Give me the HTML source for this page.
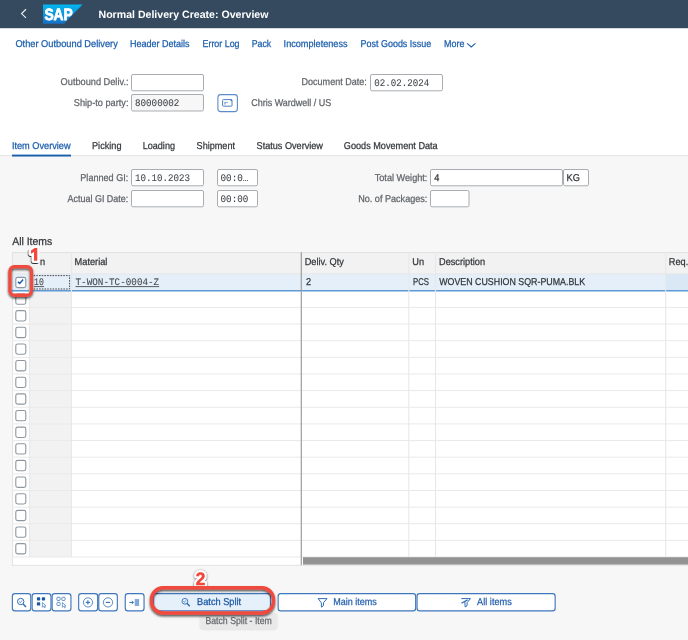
<!DOCTYPE html>
<html><head><meta charset="utf-8"><title>Normal Delivery Create: Overview</title>
<style>html,body{margin:0;padding:0;background:#f7f7f7;}body{width:688px;height:640px;overflow:hidden;}svg{display:block;will-change:transform;text-rendering:geometricPrecision;}</style>
</head><body>
<svg width="688" height="640" viewBox="0 0 688 640">
<rect x="0" y="0" width="688" height="640" fill="#f7f7f7"/>
<rect x="0" y="28" width="688" height="127.2" fill="#fff"/>
<line x1="0" y1="155.7" x2="688" y2="155.7" stroke="#e3e3e3" stroke-width="1"/>
<rect x="0" y="0" width="688" height="28.2" fill="#354a5f"/>
<polyline points="26,9.3 21.6,13.6 26,17.9" fill="none" stroke="#e8ecf0" stroke-width="1.2"/>
<defs><linearGradient id="sapg" x1="0" y1="0" x2="0" y2="1"><stop offset="0" stop-color="#00b9f2"/><stop offset="1" stop-color="#1870c5"/></linearGradient></defs>
<polygon points="43,4.4 82.5,4.4 64,23.8 43,23.8" fill="url(#sapg)"/>
<text x="44.4" y="20.0" font-family="Liberation Sans" font-size="16.4" fill="#fff" font-weight="bold" textLength="28.4" lengthAdjust="spacingAndGlyphs" stroke="#fff" stroke-width="0.8" stroke-linejoin="round">SAP</text>
<text x="98.5" y="17.6" font-family="Liberation Sans" font-size="10.6" fill="#fff" font-weight="bold" textLength="170" lengthAdjust="spacingAndGlyphs">Normal Delivery Create: Overview</text>
<text x="15.4" y="47.3" font-family="Liberation Sans" font-size="9.94" fill="#1a5dab" textLength="102.4" lengthAdjust="spacingAndGlyphs" stroke="#1a5dab" stroke-width="0.25">Other Outbound Delivery</text>
<text x="130" y="47.3" font-family="Liberation Sans" font-size="9.94" fill="#1a5dab" textLength="59.5" lengthAdjust="spacingAndGlyphs" stroke="#1a5dab" stroke-width="0.25">Header Details</text>
<text x="202.5" y="47.3" font-family="Liberation Sans" font-size="9.94" fill="#1a5dab" textLength="37" lengthAdjust="spacingAndGlyphs" stroke="#1a5dab" stroke-width="0.25">Error Log</text>
<text x="251.75" y="47.3" font-family="Liberation Sans" font-size="9.94" fill="#1a5dab" textLength="19.5" lengthAdjust="spacingAndGlyphs" stroke="#1a5dab" stroke-width="0.25">Pack</text>
<text x="283.6" y="47.3" font-family="Liberation Sans" font-size="9.94" fill="#1a5dab" textLength="64" lengthAdjust="spacingAndGlyphs" stroke="#1a5dab" stroke-width="0.25">Incompleteness</text>
<text x="360.6" y="47.3" font-family="Liberation Sans" font-size="9.94" fill="#1a5dab" textLength="70.6" lengthAdjust="spacingAndGlyphs" stroke="#1a5dab" stroke-width="0.25">Post Goods Issue</text>
<text x="444" y="47.3" font-family="Liberation Sans" font-size="9.94" fill="#1a5dab" textLength="20.4" lengthAdjust="spacingAndGlyphs" stroke="#1a5dab" stroke-width="0.25">More</text>
<polyline points="467.1,43.3 471.3,47 475.4,43.3" fill="none" stroke="#1a5dab" stroke-width="1.05"/>
<text x="60.6" y="84.9" font-family="Liberation Sans" font-size="9.94" fill="#606469" textLength="67.9" lengthAdjust="spacingAndGlyphs" stroke="#606469" stroke-width="0.25">Outbound Deliv.:</text>
<rect x="131.5" y="74.5" width="72" height="16.3" fill="#fff" stroke="#a9adb1" stroke-width="1" rx="1.5"/>
<text x="73.8" y="105.5" font-family="Liberation Sans" font-size="9.94" fill="#606469" textLength="54.7" lengthAdjust="spacingAndGlyphs" stroke="#606469" stroke-width="0.25">Ship-to party:</text>
<rect x="131.5" y="94.5" width="72" height="16.5" fill="#f7f7f7" stroke="#a9adb1" stroke-width="1" rx="1.5"/>
<text x="134.9" y="106.3" font-family="Liberation Mono" font-size="10.04" fill="#43474c" textLength="44.5" lengthAdjust="spacingAndGlyphs" stroke="#43474c" stroke-width="0.08">80000002</text>
<rect x="217.9" y="94.6" width="19.5" height="17" fill="#fff" stroke="#5d8ccc" stroke-width="1.1" rx="2.8"/>
<rect x="222.6" y="99.6" width="9.4" height="6.6" fill="none" stroke="#4a80c4" stroke-width="1" rx="0.8"/>
<line x1="224.2" y1="102.6" x2="227.9" y2="102.6" stroke="#6f9ad0" stroke-width="0.9"/>
<rect x="224.2" y="103.2" width="1.4" height="1.3" fill="#6f9ad0"/>
<circle cx="231.3" cy="100.3" r="0.9" fill="#4a80c4"/>
<text x="251.2" y="106.3" font-family="Liberation Sans" font-size="9.94" fill="#606469" textLength="80" lengthAdjust="spacingAndGlyphs" stroke="#606469" stroke-width="0.25">Chris Wardwell / US</text>
<text x="301.6" y="84.9" font-family="Liberation Sans" font-size="9.94" fill="#606469" textLength="65.1" lengthAdjust="spacingAndGlyphs" stroke="#606469" stroke-width="0.25">Document Date:</text>
<rect x="370.5" y="74.5" width="72" height="16.3" fill="#fff" stroke="#a9adb1" stroke-width="1" rx="1.5"/>
<text x="374.2" y="85.7" font-family="Liberation Mono" font-size="10.04" fill="#43474c" textLength="55" lengthAdjust="spacingAndGlyphs" stroke="#43474c" stroke-width="0.08">02.02.2024</text>
<text x="11.9" y="149.1" font-family="Liberation Sans" font-size="9.94" fill="#1a5dab" textLength="58.7" lengthAdjust="spacingAndGlyphs" stroke="#1a5dab" stroke-width="0.25">Item Overview</text>
<rect x="12" y="154.6" width="59" height="1.9" fill="#1a5dab"/>
<text x="92" y="149.1" font-family="Liberation Sans" font-size="9.94" fill="#32363a" textLength="29.5" lengthAdjust="spacingAndGlyphs" stroke="#32363a" stroke-width="0.25">Picking</text>
<text x="142.7" y="149.1" font-family="Liberation Sans" font-size="9.94" fill="#32363a" textLength="32.3" lengthAdjust="spacingAndGlyphs" stroke="#32363a" stroke-width="0.25">Loading</text>
<text x="196.6" y="149.1" font-family="Liberation Sans" font-size="9.94" fill="#32363a" textLength="38.4" lengthAdjust="spacingAndGlyphs" stroke="#32363a" stroke-width="0.25">Shipment</text>
<text x="256.6" y="149.1" font-family="Liberation Sans" font-size="9.94" fill="#32363a" textLength="66.3" lengthAdjust="spacingAndGlyphs" stroke="#32363a" stroke-width="0.25">Status Overview</text>
<text x="343.8" y="149.1" font-family="Liberation Sans" font-size="9.94" fill="#32363a" textLength="93.9" lengthAdjust="spacingAndGlyphs" stroke="#32363a" stroke-width="0.25">Goods Movement Data</text>
<text x="80.3" y="180.5" font-family="Liberation Sans" font-size="9.94" fill="#606469" textLength="48" lengthAdjust="spacingAndGlyphs" stroke="#606469" stroke-width="0.25">Planned GI:</text>
<rect x="131.5" y="169.5" width="72" height="16.3" fill="#fff" stroke="#a9adb1" stroke-width="1" rx="1.5"/>
<text x="134.9" y="181.3" font-family="Liberation Mono" font-size="10.04" fill="#43474c" textLength="55" lengthAdjust="spacingAndGlyphs" stroke="#43474c" stroke-width="0.08">10.10.2023</text>
<rect x="217.5" y="169.5" width="40" height="16.3" fill="#fff" stroke="#a9adb1" stroke-width="1" rx="1.5"/>
<text x="220.5" y="181.3" font-family="Liberation Mono" font-size="10.04" fill="#43474c" textLength="27.9" lengthAdjust="spacingAndGlyphs" stroke="#43474c" stroke-width="0.08">00:0…</text>
<text x="67.5" y="201.5" font-family="Liberation Sans" font-size="9.94" fill="#606469" textLength="60.8" lengthAdjust="spacingAndGlyphs" stroke="#606469" stroke-width="0.25">Actual GI Date:</text>
<rect x="131.5" y="190.5" width="72" height="16.3" fill="#fff" stroke="#a9adb1" stroke-width="1" rx="1.5"/>
<rect x="217.5" y="190.5" width="40" height="16.3" fill="#fff" stroke="#a9adb1" stroke-width="1" rx="1.5"/>
<text x="220.5" y="202.3" font-family="Liberation Mono" font-size="10.04" fill="#43474c" textLength="27.9" lengthAdjust="spacingAndGlyphs" stroke="#43474c" stroke-width="0.08">00:00</text>
<text x="374.7" y="180.5" font-family="Liberation Sans" font-size="9.94" fill="#606469" textLength="52.7" lengthAdjust="spacingAndGlyphs" stroke="#606469" stroke-width="0.25">Total Weight:</text>
<rect x="430.5" y="169.5" width="132" height="16.3" fill="#fff" stroke="#a9adb1" stroke-width="1" rx="1.5"/>
<text x="434.3" y="181" font-family="Liberation Sans" font-size="9.94" fill="#32363a" textLength="5.12" lengthAdjust="spacingAndGlyphs" stroke="#32363a" stroke-width="0.25">4</text>
<rect x="563.5" y="169.5" width="25" height="16.3" fill="#fff" stroke="#a9adb1" stroke-width="1" rx="1.5"/>
<text x="566.6" y="181" font-family="Liberation Sans" font-size="9.94" fill="#32363a" textLength="13.29" lengthAdjust="spacingAndGlyphs" stroke="#32363a" stroke-width="0.25">KG</text>
<text x="358.2" y="201.5" font-family="Liberation Sans" font-size="9.94" fill="#606469" textLength="69.2" lengthAdjust="spacingAndGlyphs" stroke="#606469" stroke-width="0.25">No. of Packages:</text>
<rect x="430.5" y="190.5" width="38.5" height="16.3" fill="#fff" stroke="#a9adb1" stroke-width="1" rx="1.5"/>
<text x="12.2" y="244.8" font-family="Liberation Sans" font-size="11.02" fill="#32363a" textLength="40" lengthAdjust="spacingAndGlyphs" stroke="#32363a" stroke-width="0.25">All Items</text>
<rect x="12.1" y="252.3" width="676" height="313.2" fill="#fff"/>
<rect x="12.1" y="252.3" width="676" height="21.849999999999966" fill="#f2f2f2"/>
<rect x="29.6" y="274.15" width="41.9" height="282.88" fill="#f2f2f2"/>
<rect x="12.1" y="273.8" width="676" height="16.4" fill="#e5eff9"/>
<rect x="665.7" y="273.8" width="22.3" height="16.4" fill="#dae7f5"/>
<line x1="12" y1="252.60000000000002" x2="688" y2="252.60000000000002" stroke="#dedede" stroke-width="0.9"/>
<line x1="12.6" y1="252.3" x2="12.6" y2="565.5" stroke="#e2e2e2" stroke-width="1"/>
<line x1="12" y1="273.95" x2="688" y2="273.95" stroke="#e6e6e6" stroke-width="1"/>
<line x1="12" y1="307.42999999999995" x2="688" y2="307.42999999999995" stroke="#e9e9e9" stroke-width="1"/>
<line x1="12" y1="324.07" x2="688" y2="324.07" stroke="#e9e9e9" stroke-width="1"/>
<line x1="12" y1="340.71" x2="688" y2="340.71" stroke="#e9e9e9" stroke-width="1"/>
<line x1="12" y1="357.34999999999997" x2="688" y2="357.34999999999997" stroke="#e9e9e9" stroke-width="1"/>
<line x1="12" y1="373.99" x2="688" y2="373.99" stroke="#e9e9e9" stroke-width="1"/>
<line x1="12" y1="390.63" x2="688" y2="390.63" stroke="#e9e9e9" stroke-width="1"/>
<line x1="12" y1="407.27" x2="688" y2="407.27" stroke="#e9e9e9" stroke-width="1"/>
<line x1="12" y1="423.90999999999997" x2="688" y2="423.90999999999997" stroke="#e9e9e9" stroke-width="1"/>
<line x1="12" y1="440.54999999999995" x2="688" y2="440.54999999999995" stroke="#e9e9e9" stroke-width="1"/>
<line x1="12" y1="457.19" x2="688" y2="457.19" stroke="#e9e9e9" stroke-width="1"/>
<line x1="12" y1="473.83" x2="688" y2="473.83" stroke="#e9e9e9" stroke-width="1"/>
<line x1="12" y1="490.46999999999997" x2="688" y2="490.46999999999997" stroke="#e9e9e9" stroke-width="1"/>
<line x1="12" y1="507.11" x2="688" y2="507.11" stroke="#e9e9e9" stroke-width="1"/>
<line x1="12" y1="523.75" x2="688" y2="523.75" stroke="#e9e9e9" stroke-width="1"/>
<line x1="12" y1="540.39" x2="688" y2="540.39" stroke="#e9e9e9" stroke-width="1"/>
<line x1="12" y1="557.03" x2="688" y2="557.03" stroke="#e9e9e9" stroke-width="1"/>
<line x1="12" y1="290.78999999999996" x2="688" y2="290.78999999999996" stroke="#5d9ad6" stroke-width="1.6"/>
<line x1="12" y1="565.3" x2="688" y2="565.3" stroke="#e2e2e2" stroke-width="1"/>
<line x1="29.6" y1="252.3" x2="29.6" y2="557.03" stroke="#e8e8e8" stroke-width="1.1"/>
<line x1="71.5" y1="252.3" x2="71.5" y2="557.03" stroke="#e8e8e8" stroke-width="1.1"/>
<line x1="408.8" y1="252.3" x2="408.8" y2="557.03" stroke="#e8e8e8" stroke-width="1.1"/>
<line x1="435.5" y1="252.3" x2="435.5" y2="557.03" stroke="#e8e8e8" stroke-width="1.1"/>
<line x1="665.7" y1="252.3" x2="665.7" y2="557.03" stroke="#e8e8e8" stroke-width="1.1"/>
<line x1="301.3" y1="252.3" x2="301.3" y2="565" stroke="#9c9c9c" stroke-width="1.2"/>
<rect x="303" y="557.2" width="385" height="7.4" fill="#939393"/>
<text x="74.6" y="265.3" font-family="Liberation Sans" font-size="9.94" fill="#32363a" textLength="32.8" lengthAdjust="spacingAndGlyphs" stroke="#32363a" stroke-width="0.25">Material</text>
<text x="304.7" y="265.3" font-family="Liberation Sans" font-size="9.94" fill="#32363a" textLength="39.19" lengthAdjust="spacingAndGlyphs" stroke="#32363a" stroke-width="0.25">Deliv. Qty</text>
<text x="412.3" y="265.3" font-family="Liberation Sans" font-size="9.94" fill="#32363a" textLength="11.76" lengthAdjust="spacingAndGlyphs" stroke="#32363a" stroke-width="0.25">Un</text>
<text x="439" y="265.3" font-family="Liberation Sans" font-size="9.94" fill="#32363a" textLength="46.02" lengthAdjust="spacingAndGlyphs" stroke="#32363a" stroke-width="0.25">Description</text>
<text x="668.8" y="265.3" font-family="Liberation Sans" font-size="9.94" fill="#32363a" textLength="19.43" lengthAdjust="spacingAndGlyphs" stroke="#32363a" stroke-width="0.25">Req.</text>
<text x="40" y="265.3" font-family="Liberation Sans" font-size="9.94" fill="#32363a" textLength="5.12" lengthAdjust="spacingAndGlyphs" stroke="#32363a" stroke-width="0.25">n</text>
<path d="M33.6,275.6 L69.6,275.6 L69.6,289 L33.6,289" fill="none" stroke="#4a4a4a" stroke-width="1" stroke-dasharray="1.6,1.1"/>
<text x="34" y="284.9" font-family="Liberation Mono" font-size="10.04" fill="#43474c" textLength="9.8" lengthAdjust="spacingAndGlyphs" stroke="#43474c" stroke-width="0.08">10</text>
<line x1="34" y1="286.6" x2="44" y2="286.6" stroke="#32363a" stroke-width="0.8"/>
<text x="75.5" y="284.9" font-family="Liberation Mono" font-size="10.04" fill="#43474c" textLength="83.7" lengthAdjust="spacingAndGlyphs" stroke="#43474c" stroke-width="0.08">T-WON-TC-0004-Z</text>
<line x1="75.5" y1="286.6" x2="159.2" y2="286.6" stroke="#32363a" stroke-width="0.8"/>
<text x="305.9" y="284.9" font-family="Liberation Sans" font-size="9.94" fill="#32363a" textLength="5.12" lengthAdjust="spacingAndGlyphs" stroke="#32363a" stroke-width="0.25">2</text>
<text x="413" y="284.9" font-family="Liberation Sans" font-size="9.94" fill="#32363a" textLength="16" lengthAdjust="spacingAndGlyphs" stroke="#32363a" stroke-width="0.25">PCS</text>
<text x="439.2" y="284.9" font-family="Liberation Sans" font-size="9.94" fill="#32363a" textLength="146" lengthAdjust="spacingAndGlyphs" stroke="#32363a" stroke-width="0.25">WOVEN CUSHION SQR-PUMA.BLK</text>
<rect x="15.8" y="277.34999999999997" width="10" height="10.3" fill="#fff" stroke="#8e979f" stroke-width="1.1" rx="1.9"/>
<rect x="15.8" y="294.00999999999993" width="10" height="10.3" fill="#fff" stroke="#8e979f" stroke-width="1.1" rx="1.9"/>
<rect x="15.8" y="310.65" width="10" height="10.3" fill="#fff" stroke="#8e979f" stroke-width="1.1" rx="1.9"/>
<rect x="15.8" y="327.28999999999996" width="10" height="10.3" fill="#fff" stroke="#8e979f" stroke-width="1.1" rx="1.9"/>
<rect x="15.8" y="343.92999999999995" width="10" height="10.3" fill="#fff" stroke="#8e979f" stroke-width="1.1" rx="1.9"/>
<rect x="15.8" y="360.56999999999994" width="10" height="10.3" fill="#fff" stroke="#8e979f" stroke-width="1.1" rx="1.9"/>
<rect x="15.8" y="377.21" width="10" height="10.3" fill="#fff" stroke="#8e979f" stroke-width="1.1" rx="1.9"/>
<rect x="15.8" y="393.84999999999997" width="10" height="10.3" fill="#fff" stroke="#8e979f" stroke-width="1.1" rx="1.9"/>
<rect x="15.8" y="410.48999999999995" width="10" height="10.3" fill="#fff" stroke="#8e979f" stroke-width="1.1" rx="1.9"/>
<rect x="15.8" y="427.12999999999994" width="10" height="10.3" fill="#fff" stroke="#8e979f" stroke-width="1.1" rx="1.9"/>
<rect x="15.8" y="443.77" width="10" height="10.3" fill="#fff" stroke="#8e979f" stroke-width="1.1" rx="1.9"/>
<rect x="15.8" y="460.40999999999997" width="10" height="10.3" fill="#fff" stroke="#8e979f" stroke-width="1.1" rx="1.9"/>
<rect x="15.8" y="477.04999999999995" width="10" height="10.3" fill="#fff" stroke="#8e979f" stroke-width="1.1" rx="1.9"/>
<rect x="15.8" y="493.68999999999994" width="10" height="10.3" fill="#fff" stroke="#8e979f" stroke-width="1.1" rx="1.9"/>
<rect x="15.8" y="510.33000000000004" width="10" height="10.3" fill="#fff" stroke="#8e979f" stroke-width="1.1" rx="1.9"/>
<rect x="15.8" y="526.9699999999999" width="10" height="10.3" fill="#fff" stroke="#8e979f" stroke-width="1.1" rx="1.9"/>
<rect x="15.8" y="543.61" width="10" height="10.3" fill="#fff" stroke="#8e979f" stroke-width="1.1" rx="1.9"/>
<polyline points="17.9,281.7 19.7,283.4 23.1,279.6" fill="none" stroke="#1f5fae" stroke-width="1.5" stroke-linejoin="round"/>
<rect x="12.350000000000001" y="593.6" width="18.4" height="17.2" fill="#fff" stroke="#3f77bd" stroke-width="1.15" rx="2.6"/>
<rect x="32.15" y="593.6" width="18.799999999999997" height="17.2" fill="#fff" stroke="#3f77bd" stroke-width="1.15" rx="2.6"/>
<rect x="52.15" y="593.6" width="18.799999999999997" height="17.2" fill="#fff" stroke="#3f77bd" stroke-width="1.15" rx="2.6"/>
<rect x="78.64999999999999" y="593.6" width="19.0" height="17.2" fill="#fff" stroke="#3f77bd" stroke-width="1.15" rx="2.6"/>
<rect x="98.75" y="593.6" width="18.599999999999998" height="17.2" fill="#fff" stroke="#3f77bd" stroke-width="1.15" rx="2.6"/>
<rect x="125.25" y="593.6" width="18.799999999999997" height="17.2" fill="#fff" stroke="#3f77bd" stroke-width="1.15" rx="2.6"/>
<rect x="153.55" y="593.6" width="116.9" height="17.2" fill="#e6f0fa" stroke="#3f77bd" stroke-width="1.15" rx="2.6"/>
<rect x="278.15000000000003" y="593.6" width="137.5" height="17.2" fill="#fff" stroke="#3f77bd" stroke-width="1.15" rx="2.6"/>
<rect x="417.05" y="593.6" width="138.1" height="17.2" fill="#fff" stroke="#3f77bd" stroke-width="1.15" rx="2.6"/>
<circle cx="20.7" cy="601.5" r="3.2" fill="none" stroke="#2f6db5" stroke-width="1"/>
<line x1="23.1" y1="603.9" x2="26" y2="606.9" stroke="#2f6db5" stroke-width="1.5"/>
<polyline points="19.3,601.6 20.4,602.6 22,600.5" fill="none" stroke="#2f6db5" stroke-width="0.8"/>
<rect x="36.9" y="597.2" width="3.3" height="3.3" fill="#1b59a8" rx="0.7"/>
<rect x="41.8" y="597.2" width="3.3" height="3.3" fill="#1b59a8" rx="0.7"/>
<rect x="36.9" y="602.3000000000001" width="3.3" height="3.3" fill="#1b59a8" rx="0.7"/>
<path d="M42.4,602.6 L42.4,607.3 L43.5,606.2 L44.5,607.8 L45.3,607.4 L44.5,605.9 L45.9,605.7 Z" fill="#fff" stroke="#2f6db5" stroke-width="0.65" stroke-linejoin="round"/>
<rect x="56.95" y="597.25" width="3.2" height="3.2" fill="none" stroke="#2f6db5" stroke-width="0.75" rx="0.8"/>
<rect x="61.85" y="597.25" width="3.2" height="3.2" fill="none" stroke="#2f6db5" stroke-width="0.75" rx="0.8"/>
<rect x="56.95" y="602.35" width="3.2" height="3.2" fill="none" stroke="#2f6db5" stroke-width="0.75" rx="0.8"/>
<path d="M62.4,602.6 L62.4,607.3 L63.5,606.2 L64.5,607.8 L65.3,607.4 L64.5,605.9 L65.9,605.7 Z" fill="#fff" stroke="#2f6db5" stroke-width="0.65" stroke-linejoin="round"/>
<circle cx="88" cy="602.4" r="4.6" fill="none" stroke="#2f6db5" stroke-width="0.8"/>
<line x1="85.7" y1="602.4" x2="90.1" y2="602.4" stroke="#2f6db5" stroke-width="1.1"/>
<line x1="87.9" y1="600.2" x2="87.9" y2="604.6" stroke="#2f6db5" stroke-width="1.1"/>
<circle cx="108" cy="602.4" r="4.6" fill="none" stroke="#2f6db5" stroke-width="0.8"/>
<line x1="105.7" y1="602.4" x2="110.1" y2="602.4" stroke="#2f6db5" stroke-width="1.1"/>
<line x1="129.3" y1="602.4" x2="133.3" y2="602.4" stroke="#2f6db5" stroke-width="1"/>
<polyline points="131.9,600.9 133.5,602.4 131.9,603.9" fill="none" stroke="#2f6db5" stroke-width="0.9"/>
<rect x="134.8" y="598.9" width="4.3" height="7.1" fill="#8fb0dc"/>
<line x1="134.8" y1="600.2" x2="139.1" y2="600.2" stroke="#6f97cf" stroke-width="0.5"/>
<line x1="134.8" y1="601.8" x2="139.1" y2="601.8" stroke="#6f97cf" stroke-width="0.5"/>
<line x1="134.8" y1="603.4" x2="139.1" y2="603.4" stroke="#6f97cf" stroke-width="0.5"/>
<line x1="134.8" y1="605" x2="139.1" y2="605" stroke="#6f97cf" stroke-width="0.5"/>
<circle cx="184.9" cy="601.3" r="2.9" fill="none" stroke="#2f6db5" stroke-width="0.9"/>
<line x1="186.9" y1="603.3" x2="189.8" y2="606.3" stroke="#2f6db5" stroke-width="1.4"/>
<polyline points="183.3,601.3 184.4,602.4 186,600.3" fill="none" stroke="#2f6db5" stroke-width="0.7"/>
<text x="197.1" y="604.55" font-family="Liberation Sans" font-size="9.94" fill="#1f5aa6" textLength="44" lengthAdjust="spacingAndGlyphs" stroke="#1f5aa6" stroke-width="0.3">Batch Split</text>
<path d="M318.1,598.6 L327,598.6 L323.5,602.7 L323.4,605.7 L321.5,607.1 L321.3,602.7 Z" fill="none" stroke="#2f6db5" stroke-width="1" stroke-linejoin="round"/>
<text x="333.2" y="604.6" font-family="Liberation Sans" font-size="9.94" fill="#2862ad" textLength="43.6" lengthAdjust="spacingAndGlyphs" stroke="#2862ad" stroke-width="0.25">Main items</text>
<path d="M461.3,598.6 L470.5,598.6 L467.2,602.5 L467,605.8 L465.2,607 L464.8,601.6" fill="none" stroke="#2f6db5" stroke-width="1" stroke-linejoin="round"/>
<line x1="461.4" y1="603.2" x2="467.6" y2="599.9" stroke="#2f6db5" stroke-width="1.2"/>
<text x="477.1" y="604.6" font-family="Liberation Sans" font-size="9.94" fill="#2862ad" textLength="34.7" lengthAdjust="spacingAndGlyphs" stroke="#2862ad" stroke-width="0.25">All items</text>
<defs><filter id="tsh" x="-20%" y="-40%" width="140%" height="180%"><feDropShadow dx="0" dy="0.8" stdDeviation="1" flood-color="#000" flood-opacity="0.18"/></filter></defs>
<rect x="200.6" y="613" width="76" height="15.3" rx="2" fill="#e9e9e9" filter="url(#tsh)"/>
<text x="205.4" y="623.6" font-family="Liberation Sans" font-size="9.94" fill="#66696d" textLength="66.5" lengthAdjust="spacingAndGlyphs" stroke="#66696d" stroke-width="0.25">Batch Split - Item</text>
<defs><filter id="sh" x="-30%" y="-30%" width="160%" height="160%"><feDropShadow dx="0" dy="1.6" stdDeviation="0.9" flood-color="#000" flood-opacity="0.7"/></filter><filter id="sh2" x="-50%" y="-50%" width="200%" height="200%"><feDropShadow dx="-0.7" dy="1" stdDeviation="0.75" flood-color="#000" flood-opacity="0.8"/></filter></defs>
<rect x="9.95" y="266.65" width="21.5" height="28.6" rx="4.5" fill="none" stroke="#f0493e" stroke-width="3.3" filter="url(#sh)"/>
<defs><filter id="sh3" x="-50%" y="-50%" width="200%" height="200%"><feDropShadow dx="0" dy="0.6" stdDeviation="0.9" flood-color="#000" flood-opacity="0.75"/></filter></defs>
<g filter="url(#sh3)"><text x="195.7" y="584.7" font-family="Liberation Sans" font-weight="bold" font-size="18" textLength="9.6" lengthAdjust="spacingAndGlyphs" fill="#fff" stroke="#fff" stroke-width="4.6" stroke-linejoin="round">2</text></g>
<text x="195.7" y="584.7" font-family="Liberation Sans" font-weight="bold" font-size="18" textLength="9.6" lengthAdjust="spacingAndGlyphs" fill="#f4473c" stroke="#f4473c" stroke-width="0.5" stroke-linejoin="round">2</text>
<rect x="151.55" y="587.85" width="121.9" height="25.1" rx="11.5" fill="none" stroke="#f0493e" stroke-width="3.5" filter="url(#sh)"/>
<path d="M31.0,250.4 L34.7,247.9 L37.3,247.9 L37.3,260.8 L34.0,260.8 L34.0,252.0 L31.0,253.7 Z" fill="#f4473c" stroke="#fff" stroke-width="4.6" stroke-linejoin="round" paint-order="stroke" filter="url(#sh2)"/>
</svg>
</body></html>
